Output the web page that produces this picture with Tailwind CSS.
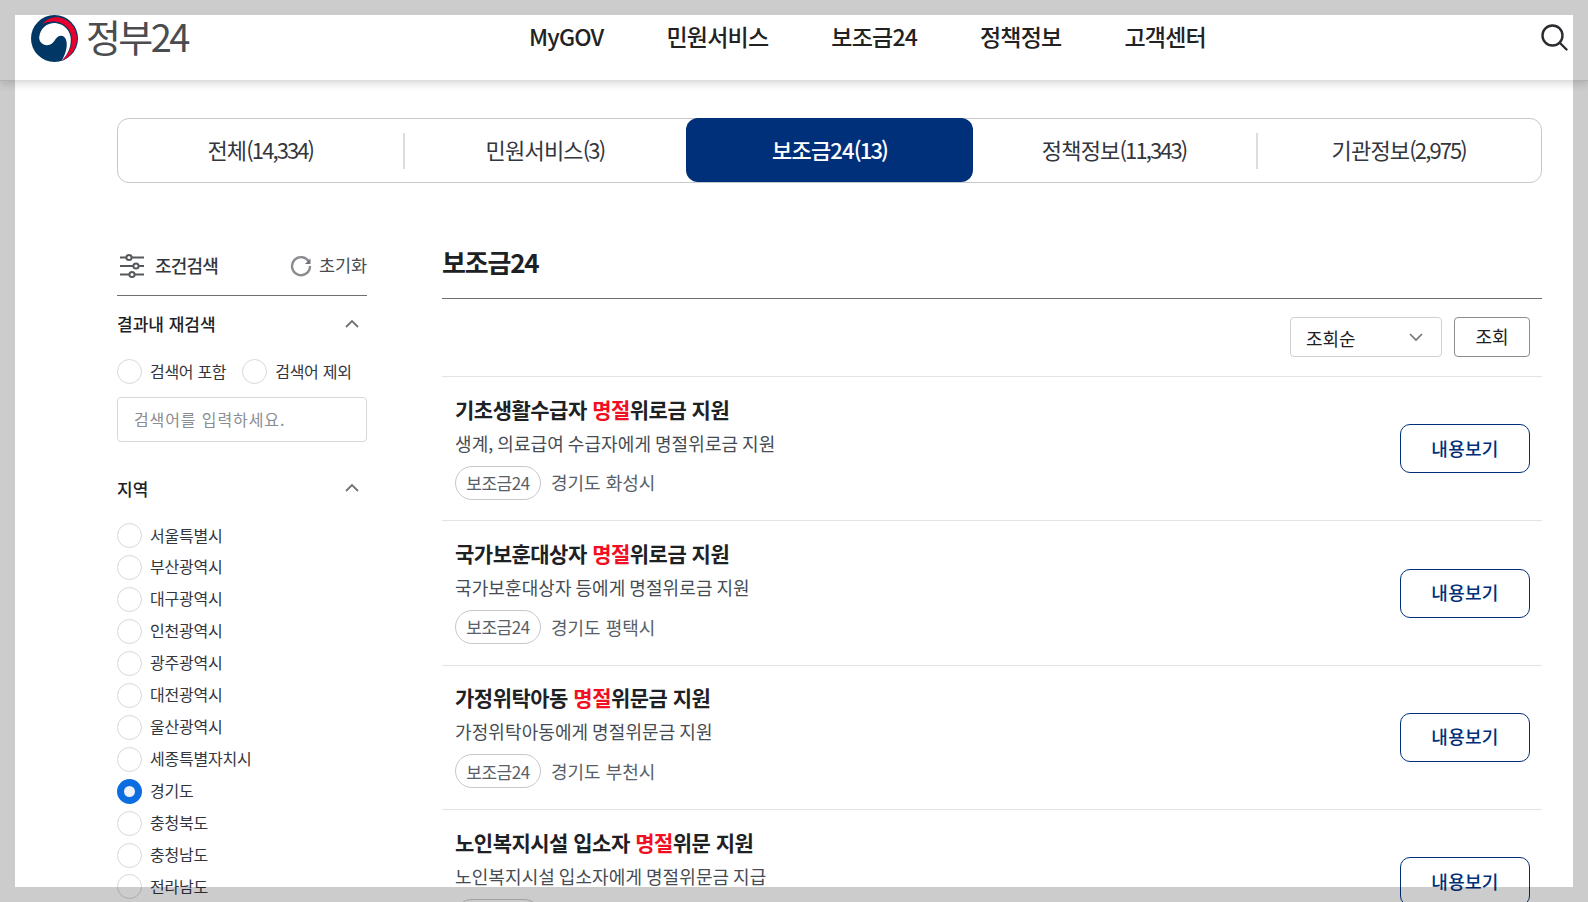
<!DOCTYPE html>
<html lang="ko">
<head>
    <meta charset="UTF-8">
    <title>정부24 | 보조금24 검색결과</title>
    <script src="https://cdn.jsdelivr.net/npm/@tailwindcss/browser@4"></script>
</head>
<body class="bg-white font-['Noto_Sans_CJK_KR','Noto_Sans',sans-serif] text-[#1e2124]">
<div class="relative h-[902px] w-[1588px] overflow-hidden">
    <!-- Header -->
    <header class="relative flex h-[81px] items-start border-b border-[#dcdde3] bg-white shadow-[0_3px_8px_rgba(0,0,0,0.15)]">
        <div class="ml-[31px] mt-[15px] flex h-[46px] items-center">
            <svg class="h-[47px] w-[47px]" viewBox="0 0 46 46">
                <circle cx="23" cy="23" r="23" fill="#003764"/>
                <path d="M8 22C9 12 17 7 25 8C33 9 39 16 39 24C39 33 35 40 30 45C34 38 36 31 34.500 25C33.500 20 28 19 25 22.500C22 26 21 29.500 15.500 29.500C11 29.500 8 26 8 22z" fill="#fff"/>
                <path d="M11 9C16 3 22 1.500 28 2.500C38 4.500 45 13 45 23C45 33 39 41 30 45C36 39 40 32 40 24C40 15 33 7 24 6.500C19 6 15 7 11 9z" fill="#e6002d"/>
            </svg>
            <span class="ml-[8px] pb-[4px] text-[38px] leading-[46px] tracking-[-2.6px] text-[#4a4c50]">정부24</span>
        </div>
        <nav class="absolute left-[529px] top-[20px] flex gap-[63px] text-[23px] font-medium leading-[32px] tracking-[-0.8px] text-[#222]">
            <a>MyGOV</a>
            <a>민원서비스</a>
            <a>보조금24</a>
            <a>정책정보</a>
            <a>고객센터</a>
        </nav>
        <svg class="absolute left-[1540px] top-[23px] h-[28px] w-[28px]" viewBox="0 0 28 28" fill="none" stroke="#2b2d30" stroke-width="2.4">
            <circle cx="12.5" cy="12.5" r="10"/>
            <path d="M20 20l6.5 6.5" stroke-linecap="round"/>
        </svg>
    </header>

    <main class="pl-[117px] pr-[46px]">
        <!-- Tabs -->
        <div class="mt-[37px] grid h-[65px] grid-cols-5 rounded-xl border border-[#c6c8cc] text-[22px] leading-[32px] tracking-[-0.8px] text-[#33363d]">
            <div class="flex items-center justify-center pb-[3px]">전체<span class="tracking-[-1.9px]">(14,334)</span></div>
            <div class="my-auto flex h-[36px] items-center justify-center border-l-2 border-[#dcdde0] pb-[3px] pr-[2px]">민원서비스<span class="tracking-[-1.9px]">(3)</span></div>
            <div class="-mx-px -mt-px flex items-center justify-center rounded-xl bg-[#00307a] pb-[3px] font-medium text-white">보조금24<span class="tracking-[-1.9px]">(13)</span></div>
            <div class="flex items-center justify-center pb-[3px]">정책정보<span class="tracking-[-1.9px]">(11,343)</span></div>
            <div class="my-auto flex h-[36px] items-center justify-center border-l-2 border-[#dcdde0] pb-[3px] pr-[2px]">기관정보<span class="tracking-[-1.9px]">(2,975)</span></div>
        </div>

        <div class="mt-[60px] flex">
            <!-- Filter sidebar -->
            <aside class="w-[250px] shrink-0">
                <div class="flex h-[53px] items-center justify-between border-b border-[#6d6f73] pb-[9px] pt-[2px]">
                    <div class="flex items-center gap-[11px] pl-[3px]">
                        <svg class="h-[26px] w-[24px]" viewBox="0 0 24 26" fill="#fff" stroke="#55585c" stroke-width="2">
                            <path d="M0 4.500h24M0 13h24M0 21.500h24"/>
                            <circle cx="9" cy="4.500" r="2.600"/>
                            <circle cx="16" cy="13" r="2.600"/>
                            <circle cx="12" cy="21.500" r="2.600"/>
                        </svg>
                        <span class="text-[18px] font-medium tracking-[-0.8px] text-[#33363d]">조건검색</span>
                    </div>
                    <div class="flex items-center gap-[7px]">
                        <svg class="h-[22px] w-[22px]" viewBox="0 0 22 22" fill="none" stroke="#8a8c90" stroke-width="2.400">
                            <path d="M19 7A9 9 0 1 0 20 11"/>
                            <path d="M20.500 3.500v5.500h-5.500z" fill="#707378" stroke="none"/>
                        </svg>
                        <span class="text-[17.5px] tracking-[-0.1px] text-[#464c53]">초기화</span>
                    </div>
                </div>

                <div class="mt-[16px] flex h-[24px] items-center justify-between pr-[7px]">
                    <span class="text-[17px] font-medium">결과내 재검색</span>
                    <svg class="h-[16px] w-[16px]" viewBox="0 0 16 16" fill="none" stroke="#707378" stroke-width="1.8"><path d="M2 11l6-6 6 6"/></svg>
                </div>
                <div class="mt-[22px] flex h-[26px] items-center text-[16px] tracking-[-0.3px] text-[#33363d]">
                    <span class="h-[25px] w-[25px] rounded-full border border-[#d6d8dc]"></span>
                    <span class="ml-[8px]">검색어 포함</span>
                    <span class="ml-[16px] h-[25px] w-[25px] rounded-full border border-[#d6d8dc]"></span>
                    <span class="ml-[8px]">검색어 제외</span>
                </div>
                <div class="mt-[13px] flex h-[45px] items-center rounded border border-[#d6d8dc] pb-[2px] pl-[16px] text-[16px] tracking-[0.9px] text-[#8a8d91]">검색어를 입력하세요.</div>

                <div class="mt-[35px] flex h-[24px] items-center justify-between pr-[7px]">
                    <span class="text-[17px] font-medium">지역</span>
                    <svg class="h-[16px] w-[16px] -translate-y-px" viewBox="0 0 16 16" fill="none" stroke="#707378" stroke-width="1.8"><path d="M2 11l6-6 6 6"/></svg>
                </div>
                <ul class="mt-[21px] flex flex-col gap-[6.96px] text-[16px] tracking-[-0.2px] text-[#33363d]">
                    <li class="flex h-[25px] items-center gap-[8px]"><span class="mt-[2px] h-[25px] w-[25px] rounded-full border border-[#d6d8dc]"></span>서울특별시</li>
                    <li class="flex h-[25px] items-center gap-[8px]"><span class="mt-[2px] h-[25px] w-[25px] rounded-full border border-[#d6d8dc]"></span>부산광역시</li>
                    <li class="flex h-[25px] items-center gap-[8px]"><span class="mt-[2px] h-[25px] w-[25px] rounded-full border border-[#d6d8dc]"></span>대구광역시</li>
                    <li class="flex h-[25px] items-center gap-[8px]"><span class="mt-[2px] h-[25px] w-[25px] rounded-full border border-[#d6d8dc]"></span>인천광역시</li>
                    <li class="flex h-[25px] items-center gap-[8px]"><span class="mt-[2px] h-[25px] w-[25px] rounded-full border border-[#d6d8dc]"></span>광주광역시</li>
                    <li class="flex h-[25px] items-center gap-[8px]"><span class="mt-[2px] h-[25px] w-[25px] rounded-full border border-[#d6d8dc]"></span>대전광역시</li>
                    <li class="flex h-[25px] items-center gap-[8px]"><span class="mt-[2px] h-[25px] w-[25px] rounded-full border border-[#d6d8dc]"></span>울산광역시</li>
                    <li class="flex h-[25px] items-center gap-[8px]"><span class="mt-[2px] h-[25px] w-[25px] rounded-full border border-[#d6d8dc]"></span>세종특별자치시</li>
                    <li class="flex h-[25px] items-center gap-[8px]"><span class="mt-[2px] h-[25px] w-[25px] rounded-full border-[7px] border-[#0b6de0] bg-[#eef1f5]"></span>경기도</li>
                    <li class="flex h-[25px] items-center gap-[8px]"><span class="mt-[2px] h-[25px] w-[25px] rounded-full border border-[#d6d8dc]"></span>충청북도</li>
                    <li class="flex h-[25px] items-center gap-[8px]"><span class="mt-[2px] h-[25px] w-[25px] rounded-full border border-[#d6d8dc]"></span>충청남도</li>
                    <li class="flex h-[25px] items-center gap-[8px]"><span class="mt-[2px] h-[25px] w-[25px] rounded-full border border-[#d6d8dc]"></span>전라남도</li>
                </ul>
            </aside>

            <!-- Results -->
            <section class="ml-[75px] min-w-0 flex-1">
                <h2 class="flex h-[56px] items-start border-b border-[#6d6f73] text-[26px] font-bold leading-[38px] tracking-[-1.2px]">보조금24</h2>
                <div class="flex h-[78px] items-start justify-end gap-[12px] border-b border-[#e2e3e5] pr-[12px] pt-[18px]">
                    <div class="flex h-[40px] w-[152px] items-center justify-between rounded border border-[#cfd1d4] pl-[15px] pr-[18px] text-[18px]">
                        <span class="pt-[3px]">조회순</span>
                        <svg class="h-[14px] w-[14px]" viewBox="0 0 14 14" fill="none" stroke="#707378" stroke-width="1.6"><path d="M1 4l6 6 6-6"/></svg>
                    </div>
                    <button class="h-[40px] w-[76px] rounded border border-[#8a8c90] pb-[2px] text-[18px]">조회</button>
                </div>

                <article class="flex h-[144.4px] items-center justify-between border-b border-[#e2e3e5] pl-[13px] pr-[12px]">
                    <div class="pb-[4px]">
                        <h3 class="text-[21px] font-bold leading-[30px] tracking-[-0.5px]">기초생활수급자 <b class="font-bold text-[#f00f23]">명절</b>위로금 지원</h3>
                        <p class="mt-[5px] text-[18px] leading-[28px] tracking-[0.1px] [word-spacing:-1.3px] text-[#464c53]">생계, 의료급여 수급자에게 명절위로금 지원</p>
                        <div class="mt-[9px] flex items-center gap-[10px] text-[18px] text-[#58616a]">
                            <span class="flex h-[34px] w-[86px] items-center justify-center rounded-full border border-[#c6c8cc] text-[17px] tracking-[-0.5px]">보조금24</span>
                            경기도 화성시
                        </div>
                    </div>
                    <button class="h-[49px] w-[130px] rounded-[10px] border border-[#00307a] pb-px text-[18px] font-medium tracking-[0.3px] text-[#00307a]">내용보기</button>
                </article>
                <article class="flex h-[144.4px] items-center justify-between border-b border-[#e2e3e5] pl-[13px] pr-[12px]">
                    <div class="pb-[4px]">
                        <h3 class="text-[21px] font-bold leading-[30px] tracking-[-0.5px]">국가보훈대상자 <b class="font-bold text-[#f00f23]">명절</b>위로금 지원</h3>
                        <p class="mt-[5px] text-[18px] leading-[28px] tracking-[0.1px] [word-spacing:-1.3px] text-[#464c53]">국가보훈대상자 등에게 명절위로금 지원</p>
                        <div class="mt-[9px] flex items-center gap-[10px] text-[18px] text-[#58616a]">
                            <span class="flex h-[34px] w-[86px] items-center justify-center rounded-full border border-[#c6c8cc] text-[17px] tracking-[-0.5px]">보조금24</span>
                            경기도 평택시
                        </div>
                    </div>
                    <button class="h-[49px] w-[130px] rounded-[10px] border border-[#00307a] pb-px text-[18px] font-medium tracking-[0.3px] text-[#00307a]">내용보기</button>
                </article>
                <article class="flex h-[144.4px] items-center justify-between border-b border-[#e2e3e5] pl-[13px] pr-[12px]">
                    <div class="pb-[4px]">
                        <h3 class="text-[21px] font-bold leading-[30px] tracking-[-0.5px]">가정위탁아동 <b class="font-bold text-[#f00f23]">명절</b>위문금 지원</h3>
                        <p class="mt-[5px] text-[18px] leading-[28px] tracking-[0.1px] [word-spacing:-1.3px] text-[#464c53]">가정위탁아동에게 명절위문금 지원</p>
                        <div class="mt-[9px] flex items-center gap-[10px] text-[18px] text-[#58616a]">
                            <span class="flex h-[34px] w-[86px] items-center justify-center rounded-full border border-[#c6c8cc] text-[17px] tracking-[-0.5px]">보조금24</span>
                            경기도 부천시
                        </div>
                    </div>
                    <button class="h-[49px] w-[130px] rounded-[10px] border border-[#00307a] pb-px text-[18px] font-medium tracking-[0.3px] text-[#00307a]">내용보기</button>
                </article>
                <article class="flex h-[144.4px] items-center justify-between border-b border-[#e2e3e5] pl-[13px] pr-[12px]">
                    <div class="pb-[4px]">
                        <h3 class="text-[21px] font-bold leading-[30px] tracking-[-0.5px]">노인복지시설 입소자 <b class="font-bold text-[#f00f23]">명절</b>위문 지원</h3>
                        <p class="mt-[5px] text-[18px] leading-[28px] tracking-[0.1px] [word-spacing:-1.3px] text-[#464c53]">노인복지시설 입소자에게 명절위문금 지급</p>
                        <div class="mt-[9px] flex items-center gap-[10px] text-[18px] text-[#58616a]">
                            <span class="h-[34px] w-[86px] rounded-full border border-[#c6c8cc]"></span>
                        </div>
                    </div>
                    <button class="h-[49px] w-[130px] rounded-[10px] border border-[#00307a] pb-px text-[18px] font-medium tracking-[0.3px] text-[#00307a]">내용보기</button>
                </article>
            </section>
        </div>
    </main>

    <!-- Grey frame lying over the page -->
    <div class="pointer-events-none absolute inset-0 border-[15px] border-black/20"></div>
</div>
</body>
</html>
